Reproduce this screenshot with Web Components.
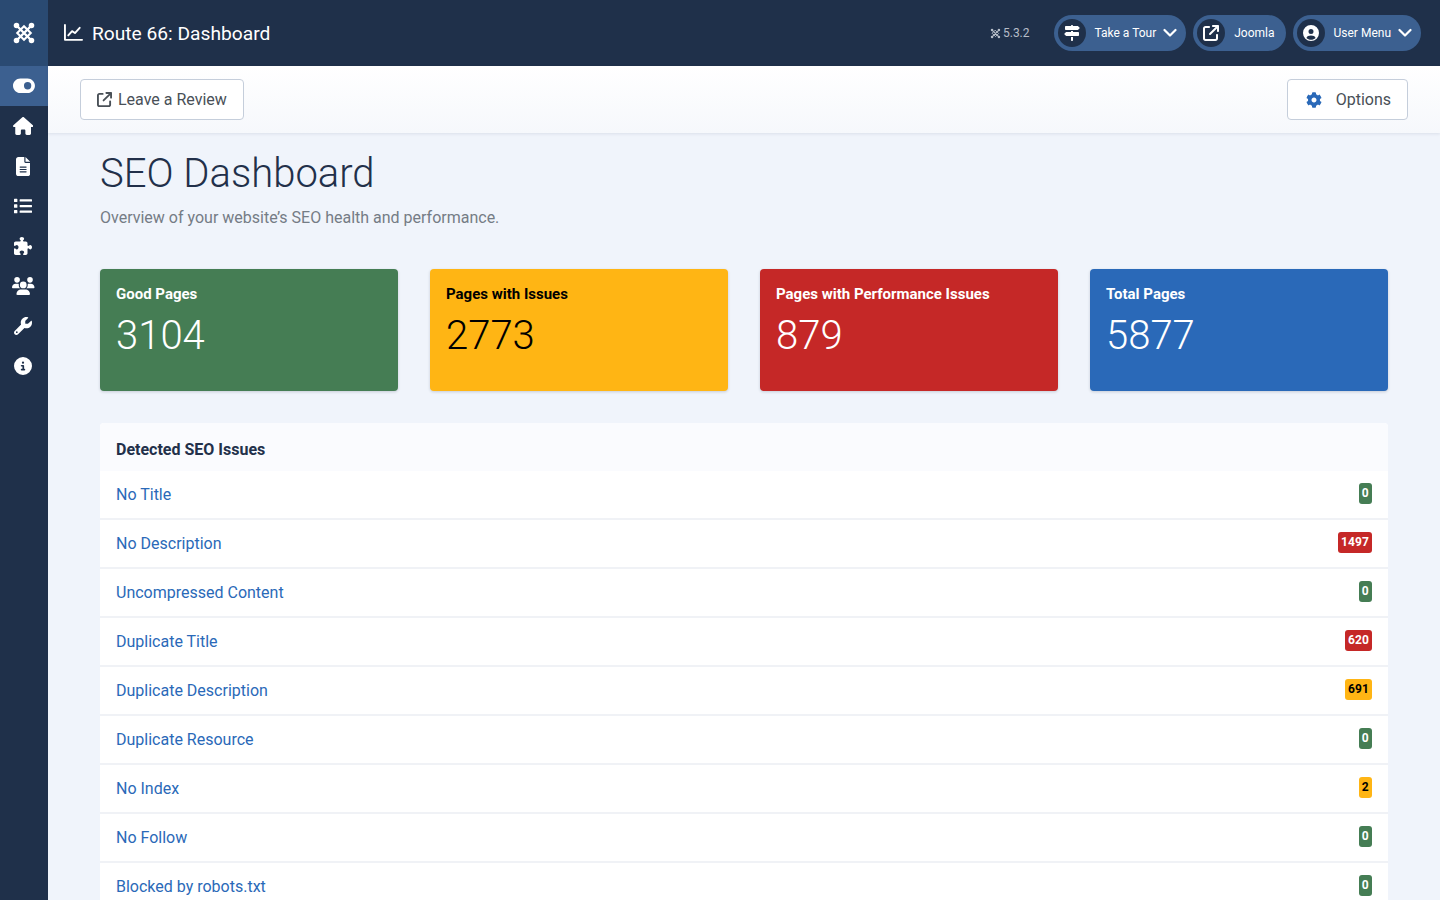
<!DOCTYPE html>
<html lang="en"><head><meta charset="utf-8"><title>SEO Dashboard</title>
<style>
html,body{margin:0;height:100%;overflow:hidden;background:#f0f4fb;font-family:Roboto,"Liberation Sans",sans-serif;color:#22304a}
</style></head><body>
<app-shell>
  <top-bar slot="top"></top-bar>
  <side-nav slot="side"></side-nav>
  <sub-bar slot="sub"></sub-bar>
  <page-head title="SEO Dashboard" sub="Overview of your website’s SEO health and performance."></page-head>
  <stat-row>
    <stat-card tone="green"><span slot="label">Good Pages</span>3104</stat-card>
    <stat-card tone="amber"><span slot="label">Pages with Issues</span>2773</stat-card>
    <stat-card tone="red"><span slot="label">Pages with Performance Issues</span>879</stat-card>
    <stat-card tone="blue"><span slot="label">Total Pages</span>5877</stat-card>
  </stat-row>
  <issue-panel>
    <span slot="head">Detected SEO Issues</span>
    <issue-row count="0" tone="green">No Title</issue-row>
    <issue-row count="1497" tone="red">No Description</issue-row>
    <issue-row count="0" tone="green">Uncompressed Content</issue-row>
    <issue-row count="620" tone="red">Duplicate Title</issue-row>
    <issue-row count="691" tone="amber">Duplicate Description</issue-row>
    <issue-row count="0" tone="green">Duplicate Resource</issue-row>
    <issue-row count="2" tone="amber">No Index</issue-row>
    <issue-row count="0" tone="green">No Follow</issue-row>
    <issue-row count="0" tone="green">Blocked by robots.txt</issue-row>
  </issue-panel>
</app-shell>
<script>
const P={
home:[576,"M575.8 255.5c0 18-15 32.1-32 32.1h-32l.7 160.2c0 2.7-.2 5.4-.5 8.1V472c0 22.1-17.9 40-40 40H456c-1.1 0-2.2 0-3.3-.1c-1.4 .1-2.8 .1-4.2 .1H416 392c-22.1 0-40-17.9-40-40V448 384c0-17.7-14.3-32-32-32H256c-17.7 0-32 14.3-32 32v64 24c0 22.1-17.9 40-40 40H160 128.1c-1.5 0-3-.1-4.5-.2c-1.2 .1-2.4 .2-3.6 .2H104c-22.1 0-40-17.9-40-40V360c0-.9 0-1.9 .1-2.8V287.6H32c-18 0-32-14-32-32.1c0-9 3-17 10-24L266.4 8c7-7 15-8 22-8s15 2 21 7L564.8 231.5c8 7 12 15 11 24z"],
file:[384,"M64 0C28.7 0 0 28.7 0 64V448c0 35.3 28.7 64 64 64H320c35.3 0 64-28.7 64-64V160H256c-17.7 0-32-14.3-32-32V0H64zM256 0V128H384L256 0zM112 256H272c8.8 0 16 7.2 16 16s-7.2 16-16 16H112c-8.8 0-16-7.2-16-16s7.2-16 16-16zm0 64H272c8.8 0 16 7.2 16 16s-7.2 16-16 16H112c-8.8 0-16-7.2-16-16s7.2-16 16-16zm0 64H272c8.8 0 16 7.2 16 16s-7.2 16-16 16H112c-8.8 0-16-7.2-16-16s7.2-16 16-16z"],
list:[512,"M80 368H16a16 16 0 0 0-16 16v64a16 16 0 0 0 16 16h64a16 16 0 0 0 16-16v-64a16 16 0 0 0-16-16zm0-320H16A16 16 0 0 0 0 64v64a16 16 0 0 0 16 16h64a16 16 0 0 0 16-16V64a16 16 0 0 0-16-16zm0 160H16a16 16 0 0 0-16 16v64a16 16 0 0 0 16 16h64a16 16 0 0 0 16-16v-64a16 16 0 0 0-16-16zm416 176H176a16 16 0 0 0-16 16v32a16 16 0 0 0 16 16h320a16 16 0 0 0 16-16v-32a16 16 0 0 0-16-16zm0-320H176a16 16 0 0 0-16 16v32a16 16 0 0 0 16 16h320a16 16 0 0 0 16-16V80a16 16 0 0 0-16-16zm0 160H176a16 16 0 0 0-16 16v32a16 16 0 0 0 16 16h320a16 16 0 0 0 16-16v-32a16 16 0 0 0-16-16z"],
puzzle:[512,"M192 104.8c0-9.2-5.8-17.3-13.2-22.8C167.2 73.3 160 61.3 160 48c0-26.5 28.7-48 64-48s64 21.5 64 48c0 13.3-7.2 25.3-18.8 34c-7.4 5.5-13.2 13.6-13.2 22.8c0 12.8 10.4 23.2 23.2 23.2H336c26.5 0 48 21.5 48 48v56.8c0 12.8 10.4 23.2 23.2 23.2c9.2 0 17.3-5.8 22.8-13.2c8.7-11.6 20.7-18.8 34-18.8c26.5 0 48 28.7 48 64s-21.5 64-48 64c-13.3 0-25.3-7.2-34-18.8c-5.5-7.4-13.6-13.2-22.8-13.2c-12.8 0-23.2 10.4-23.2 23.2V464c0 26.5-21.5 48-48 48H279.2c-12.8 0-23.2-10.4-23.2-23.2c0-9.2 5.8-17.3 13.2-22.8c11.6-8.7 18.8-20.7 18.8-34c0-26.5-28.7-48-64-48s-64 21.5-64 48c0 13.3 7.2 25.3 18.8 34c7.4 5.5 13.2 13.6 13.2 22.8c0 12.8-10.4 23.2-23.2 23.2H48c-26.5 0-48-21.5-48-48V343.2C0 330.4 10.4 320 23.2 320c9.2 0 17.3 5.8 22.8 13.2C54.7 344.8 66.7 352 80 352c26.5 0 48-28.7 48-64s-21.5-64-48-64c-13.3 0-25.3 7.2-34 18.8C40.5 250.2 32.4 256 23.2 256C10.4 256 0 245.6 0 232.8V176c0-26.5 21.5-48 48-48H168.8c12.8 0 23.2-10.4 23.2-23.2z"],
users:[640,"M144 0a80 80 0 1 1 0 160A80 80 0 1 1 144 0zM512 0a80 80 0 1 1 0 160A80 80 0 1 1 512 0zM0 298.7C0 239.8 47.8 192 106.7 192h42.7c15.9 0 31 3.5 44.6 9.7c-1.3 7.2-1.9 14.7-1.9 22.3c0 38.2 16.8 72.5 43.3 96c-.2 0-.4 0-.7 0H21.3C9.6 320 0 310.4 0 298.7zM405.3 320c-.2 0-.4 0-.7 0c26.6-23.5 43.3-57.8 43.3-96c0-7.6-.7-15-1.9-22.3c13.6-6.3 28.7-9.7 44.6-9.7h42.7C592.2 192 640 239.8 640 298.7c0 11.8-9.6 21.3-21.3 21.3H405.3zM224 224a96 96 0 1 1 192 0 96 96 0 1 1 -192 0zM128 485.3C128 411.7 187.7 352 261.3 352H378.7C452.3 352 512 411.7 512 485.3c0 14.7-11.9 26.7-26.7 26.7H154.7c-14.7 0-26.7-11.9-26.7-26.7z"],
wrench:[512,"M352 320c88.4 0 160-71.6 160-160c0-15.3-2.2-30.1-6.2-44.2c-3.1-10.8-16.4-13.2-24.3-5.3l-76.8 76.8c-3 3-7.1 4.7-11.3 4.7H336c-8.8 0-16-7.2-16-16V118.6c0-4.2 1.7-8.3 4.7-11.3l76.8-76.8c7.9-7.9 5.4-21.2-5.3-24.3C382.1 2.2 367.3 0 352 0C263.6 0 192 71.6 192 160c0 19.1 3.4 37.5 9.5 54.5L19.9 396.1C7.2 408.8 0 426.1 0 444.1C0 481.6 30.4 512 67.9 512c18 0 35.3-7.2 48-19.9L297.5 310.5c17 6.2 35.4 9.5 54.5 9.5zM80 408a24 24 0 1 1 0 48 24 24 0 1 1 0-48z"],
info:[512,"M256 512A256 256 0 1 0 256 0a256 256 0 1 0 0 512zM216 336h24V272H216c-13.3 0-24-10.7-24-24s10.7-24 24-24h48c13.3 0 24 10.7 24 24v88h8c13.3 0 24 10.7 24 24s-10.7 24-24 24H216c-13.3 0-24-10.7-24-24s10.7-24 24-24zm40-208a32 32 0 1 1 0 64 32 32 0 1 1 0-64z"],
toggle:[576,"M192 64C86 64 0 150 0 256S86 448 192 448H384c106 0 192-86 192-192s-86-192-192-192H192zm192 96a96 96 0 1 1 0 192 96 96 0 1 1 0-192z"],
ext:[512,"M320 0c-17.7 0-32 14.3-32 32s14.3 32 32 32h82.7L201.4 265.4c-12.5 12.5-12.5 32.8 0 45.3s32.8 12.5 45.3 0L448 109.3V192c0 17.7 14.3 32 32 32s32-14.3 32-32V32c0-17.7-14.3-32-32-32H320zM80 32C35.8 32 0 67.8 0 112V432c0 44.2 35.8 80 80 80H400c44.2 0 80-35.8 80-80V320c0-17.7-14.3-32-32-32s-32 14.3-32 32V432c0 8.8-7.2 16-16 16H80c-8.8 0-16-7.2-16-16V112c0-8.8 7.2-16 16-16H192c17.7 0 32-14.3 32-32s-14.3-32-32-32H80z"],
cog:[512,"M487.4 315.7l-42.6-24.6c4.3-23.2 4.3-47 0-70.2l42.6-24.6c4.9-2.8 7.1-8.6 5.5-14-11.1-35.6-30-67.8-54.7-94.6-3.8-4.1-10-5.1-14.8-2.3L380.8 110c-17.9-15.4-38.5-27.3-60.8-35.1V25.8c0-5.6-3.9-10.5-9.4-11.7-36.7-8.2-74.3-7.8-109.2 0-5.5 1.2-9.4 6.1-9.4 11.7V75c-22.2 7.9-42.8 19.8-60.8 35.1L88.7 85.5c-4.9-2.8-11-1.9-14.8 2.3-24.7 26.7-43.6 58.9-54.7 94.6-1.7 5.4.6 11.2 5.5 14L67.3 221c-4.3 23.2-4.3 47 0 70.2l-42.6 24.6c-4.9 2.8-7.1 8.6-5.5 14 11.1 35.6 30 67.8 54.7 94.6 3.8 4.1 10 5.1 14.8 2.3l42.6-24.6c17.9 15.4 38.5 27.3 60.8 35.1v49.2c0 5.6 3.9 10.5 9.4 11.7 36.7 8.2 74.3 7.8 109.2 0 5.5-1.2 9.4-6.1 9.4-11.7v-49.2c22.2-7.9 42.8-19.8 60.8-35.1l42.6 24.6c4.9 2.8 11 1.9 14.8-2.3 24.7-26.7 43.6-58.9 54.7-94.6 1.5-5.5-.7-11.3-5.6-14.1zM256 336c-44.1 0-80-35.9-80-80s35.9-80 80-80 80 35.9 80 80-35.9 80-80 80z"],
user:[512,"M256 512A256 256 0 1 0 256 0a256 256 0 1 0 0 512zM176 208a80 80 0 1 1 160 0 80 80 0 1 1-160 0zM110 414c20-52 72-78 146-78s126 26 146 78c-38 36-88 58-146 58s-108-22-146-58z"],
signs:[512,"M224 32H64C46.3 32 32 46.3 32 64v64c0 17.7 14.3 32 32 32H441.4c4.2 0 8.3-1.7 11.3-4.7l48-48c6.2-6.2 6.2-16.4 0-22.6l-48-48c-3-3-7.1-4.7-11.3-4.7H288c0-17.7-14.3-32-32-32s-32 14.3-32 32zM480 256c0-17.7-14.3-32-32-32H288V192H224v32H70.6c-4.2 0-8.3 1.7-11.3 4.7l-48 48c-6.2 6.2-6.2 16.4 0 22.6l48 48c3 3 7.1 4.7 11.3 4.7H448c17.7 0 32-14.3 32-32V256zM288 480V384H224v96c0 17.7 14.3 32 32 32s32-14.3 32-32z"]
};
const icon=(n,h,c='currentColor')=>`<svg viewBox="0 0 ${P[n][0]} 512" height="${h}" width="${h*P[n][0]/512}" fill="${c}" aria-hidden="true" style="display:block;flex:none"><path fill-rule="evenodd" d="${P[n][1]}"/></svg>`;
const logo=(s,c='#fff')=>`<svg viewBox="0 0 32 32" width="${s}" height="${s}" aria-hidden="true" style="display:block;flex:none"><g fill="none" stroke="${c}" stroke-linecap="round"><path stroke-width="3.2" d="M6 6 26 26M26 6 6 26"/><path stroke-width="2.8" d="M16 7 25 16 16 25 7 16Z"/></g><g fill="${c}"><circle cx="6" cy="6" r="3.7"/><circle cx="26" cy="6" r="3.7"/><circle cx="6" cy="26" r="3.7"/><circle cx="26" cy="26" r="3.7"/></g></svg>`;
const chev=(s=14)=>`<svg viewBox="0 0 14 14" width="${s}" height="${s}" aria-hidden="true" style="display:block;flex:none"><path d="M1.5 4 7 9.5 12.5 4" fill="none" stroke="#fff" stroke-width="2.2" stroke-linecap="round" stroke-linejoin="round"/></svg>`;
function def(name,fn){customElements.define(name,class extends HTMLElement{constructor(){super();this.attachShadow({mode:'open'})}connectedCallback(){this.shadowRoot.innerHTML=fn(this)}})}

def('app-shell',()=>`<style>
:host{display:grid;grid-template-columns:48px 1fr;grid-template-rows:66px 1fr;height:100vh;overflow:hidden}
.top{grid-column:1/3}.side{grid-row:2}
.main{display:flex;flex-direction:column;min-width:0}
.body{padding:0 52px 0 52px;display:flex;flex-direction:column}
</style><div class="top"><slot name="top"></slot></div><div class="side"><slot name="side"></slot></div>
<div class="main"><slot name="sub"></slot><div class="body"><slot></slot></div></div>`);

def('top-bar',()=>`<style>
:host{display:flex;height:66px;background:#1f304a;color:#fff;align-items:center}
.logo{width:48px;height:66px;background:#2a4a72;display:flex;align-items:center;justify-content:center}
.title{display:flex;align-items:center;gap:9px;margin-left:16px;font-size:19.2px;flex:1;color:#fff}
.ver{display:flex;align-items:center;gap:2px;font-size:12px;color:#b6bdc8;margin-right:24px}
.pills{display:flex;gap:7px;margin-right:19px}
</style>
<div class="logo">${logo(24)}</div>
<div class="title"><svg viewBox="0 0 20 20" width="19" height="19" aria-hidden="true" style="display:block"><path d="M1 1v15.7h18" fill="none" stroke="#fff" stroke-width="2" stroke-linecap="round" stroke-linejoin="round"/><path d="M4.5 12 8.5 7.5 11.5 9.5 16.5 4" fill="none" stroke="#fff" stroke-width="2" stroke-linecap="round" stroke-linejoin="round"/></svg><span>Route 66: Dashboard</span></div>
<div class="ver">${logo(11,'#b6bdc8')}<span>5.3.2</span></div>
<div class="pills"><tool-pill icon="signs" caret>Take a Tour</tool-pill><tool-pill icon="ext">Joomla</tool-pill><tool-pill icon="user" caret>User Menu</tool-pill></div>`);

def('tool-pill',e=>`<style>
:host{display:inline-flex;align-items:center;height:36px;background:#3c6090;border-radius:18px;color:#fff;font-size:12px;padding:0 ${e.hasAttribute('caret')?'9px':'11px'} 0 4px}
.c{width:28px;height:28px;border-radius:50%;background:#1f304a;display:flex;align-items:center;justify-content:center;margin-right:9px}
.t{white-space:nowrap}.car{margin-left:7px}
</style><span class="c">${icon(e.getAttribute('icon'),16)}</span><span class="t"><slot></slot></span>${e.hasAttribute('caret')?`<span class="car">${chev()}</span>`:''}`);

def('side-nav',()=>`<style>
:host{display:flex;flex-direction:column;background:#1f304a;height:100%;color:#fff}
div{height:40px;display:flex;align-items:center;justify-content:center;padding-right:1.5px}
.on{background:#3c6090;padding-right:0}
</style>
<div class="on">${icon('toggle',19.5)}</div><div>${icon('home',18)}</div><div>${icon('file',19)}</div><div>${icon('list',18)}</div><div>${icon('puzzle',18)}</div><div>${icon('users',18)}</div><div>${icon('wrench',18)}</div><div>${icon('info',18)}</div>`);

def('sub-bar',()=>`<style>
:host{display:flex;justify-content:space-between;align-items:center;height:67px;padding:0 32px;box-sizing:border-box;background:linear-gradient(#fff,#f6f8fc);box-shadow:0 1px 3px rgba(34,48,74,.10)}
</style><tool-btn icon="ext" gap="6">Leave a Review</tool-btn><tool-btn icon="cog" gap="14" tint wide>Options</tool-btn>`);

def('tool-btn',e=>`<style>
:host{display:inline-flex;align-items:center;height:41px;box-sizing:border-box;border:1px solid #c5cedb;border-radius:4px;background:#fff;color:#495057;font-size:16px;padding:0 ${e.hasAttribute('wide')?'16px 0 18px':'16px'};gap:${e.getAttribute('gap')}px;white-space:nowrap}
</style>${icon(e.getAttribute('icon'),e.hasAttribute('wide')?16:15,e.hasAttribute('tint')?'#2a69b8':'#495057')}<slot></slot>`);

def('page-head',e=>`<style>
:host{display:block;padding-top:17px}
h1{margin:0;font-size:40px;font-weight:300;line-height:48px;color:#22304a}
p{margin:8px 0 0;font-size:16px;line-height:24px;color:#757c85}
</style><h1>${e.getAttribute('title')}</h1><p>${e.getAttribute('sub')}</p>`);

def('stat-row',()=>`<style>
:host{display:grid;grid-template-columns:repeat(4,1fr);gap:32px;margin-top:39px}
</style><slot></slot>`);

const T={green:['#457d54','#fff'],amber:['#ffb514','#000'],red:['#c52827','#fff'],blue:['#2a69b8','#fff']};
def('stat-card',e=>{const[b,c]=T[e.getAttribute('tone')];return `<style>
:host{display:block;height:122px;box-sizing:border-box;padding:16px;background:${b};color:${c};border-radius:4px;box-shadow:0 1px 3px rgba(34,48,74,.2)}
.l{font-size:15px;font-weight:700;line-height:19px}
.v{font-size:40px;font-weight:300;line-height:48px;margin-top:8px}
</style><div class="l"><slot name="label"></slot></div><div class="v"><slot></slot></div>`});

def('issue-panel',()=>`<style>
:host{display:block;margin-top:32px;background:#fff;border-radius:4px 4px 0 0}
.h{height:48px;box-sizing:border-box;padding:4px 16px 0;display:flex;align-items:center;font-size:16px;font-weight:700;background:#fafbfe;color:#22304a;border-radius:4px 4px 0 0}
</style><div class="h"><slot name="head"></slot></div><slot></slot>`);

def('issue-row',e=>`<style>
:host{display:flex;justify-content:space-between;align-items:center;height:49px;box-sizing:border-box;padding:0 16px;border-bottom:2px solid #f0f2f6;font-size:16px;color:#2a69b8}
</style><span><slot></slot></span><count-badge tone="${e.getAttribute('tone')}">${e.getAttribute('count')}</count-badge>`);

def('count-badge',e=>{const[b,c]=T[e.getAttribute('tone')];return `<style>
:host{display:inline-flex;align-items:center;height:21px;padding:0 3px;min-width:7.5px;justify-content:center;background:${b};color:${c};border-radius:3px;font-size:12px;font-weight:700;margin-top:-3px;letter-spacing:.1px}
</style><slot></slot>`});
</script>
</body></html>
